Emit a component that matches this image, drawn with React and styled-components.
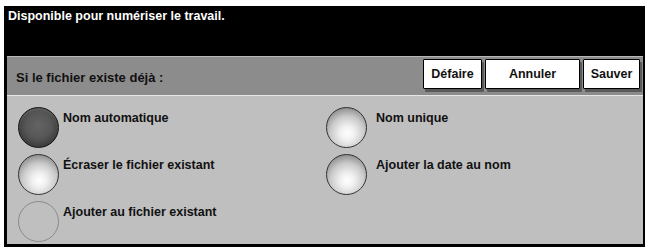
import React from "react";
import styled, { createGlobalStyle, css } from "styled-components";

const Global = createGlobalStyle`
  html, body { margin: 0; padding: 0; background: #ffffff; }
  body { font-family: "Liberation Sans", Arial, sans-serif; }
`;

const Frame = styled.div`
  margin: 6px 0 0 4px;
  width: 641px;
  height: 241px;
  box-sizing: border-box;
  border-left: 3px solid #000;
  border-right: 2px solid #000;
  border-bottom: 3px solid #000;
  background: #bfbfbf;
  display: flex;
  flex-direction: column;
  overflow: hidden;
`;

const Header = styled.div`
  height: 50px;
  flex: none;
  background: #000;
  color: #fff;
  padding: 3px 0 0 1px;
  box-sizing: border-box;
  font-family: "Liberation Sans Narrow", "Arial Narrow", "Liberation Sans", sans-serif;
  font-stretch: condensed;
  font-weight: bold;
  font-size: 12.5px;
  line-height: 15px;
`;

const Toolbar = styled.div`
  height: 40px;
  flex: none;
  box-sizing: border-box;
  border-top: 1px solid #b8b8b8;
  border-bottom: 1px solid #e6e6e6;
  background: #8c8c8c;
  display: flex;
  align-items: flex-start;
  padding: 2px 3px 0 9px;
`;

const ToolbarLabel = styled.div`
  flex: 1;
  color: #111;
  font-weight: bold;
  font-size: 13px;
  line-height: 15px;
  padding-top: 11px;
`;

const Button = styled.button`
  width: ${(p) => p.$w}px;
  height: 30px;
  margin-left: 3px;
  box-sizing: border-box;
  background: #fff;
  border: 1px solid #000;
  border-radius: 1px;
  box-shadow: 2px 3px 0 #5a5a5a;
  font-family: "Liberation Sans", Arial, sans-serif;
  font-weight: bold;
  font-size: 12.5px;
  color: #111;
  padding: 0;
`;

const Content = styled.div`
  flex: 1;
  display: grid;
  grid-template-columns: 308px 1fr;
  grid-auto-rows: 47px;
  padding: 11px 0 0 11px;
  overflow: hidden;
`;

const Option = styled.div`
  display: flex;
  align-items: flex-start;
  gap: ${(p) => p.$gap}px;
`;

const radioVariants = {
  selected: css`
    border: 1px solid #141414;
    background: radial-gradient(circle at 50% 45%, #646464 0%, #565656 45%, #383838 78%, #161616 100%);
    box-shadow: inset 0 2px 2px rgba(255, 255, 255, 0.12);
  `,
  normal: css`
    border: 1px solid #333;
    background: radial-gradient(circle at 52% 65%, #ffffff 0%, #f0f0f0 22%, #cacaca 52%, #9a9a9a 74%, #747474 84%, #4a4a4a 100%);
  `,
  disabled: css`
    border: 1px solid #8a8a8a;
    background: transparent;
  `,
};

const Radio = styled.div`
  width: 41px;
  height: 41px;
  flex: none;
  box-sizing: border-box;
  border-radius: 50%;
  ${(p) => radioVariants[p.$variant]}
`;

const Label = styled.div`
  color: #111;
  font-weight: bold;
  font-size: 12.5px;
  line-height: 15px;
  padding-top: 4px;
  white-space: nowrap;
`;

const options = [
  { label: "Nom automatique", variant: "selected", gap: 4 },
  { label: "Nom unique", variant: "normal", gap: 9 },
  { label: "Écraser le fichier existant", variant: "normal", gap: 4 },
  { label: "Ajouter la date au nom", variant: "normal", gap: 9 },
  { label: "Ajouter au fichier existant", variant: "disabled", gap: 4 },
];

export default function App() {
  return (
    <>
      <Global />
      <Frame>
        <Header>Disponible pour numériser le travail.</Header>
        <Toolbar>
          <ToolbarLabel>Si le fichier existe déjà :</ToolbarLabel>
          <Button $w={59}>Défaire</Button>
          <Button $w={95}>Annuler</Button>
          <Button $w={57}>Sauver</Button>
        </Toolbar>
        <Content>
          {options.map((o) => (
            <Option key={o.label} $gap={o.gap}>
              <Radio $variant={o.variant} />
              <Label>{o.label}</Label>
            </Option>
          ))}
        </Content>
      </Frame>
    </>
  );
}
